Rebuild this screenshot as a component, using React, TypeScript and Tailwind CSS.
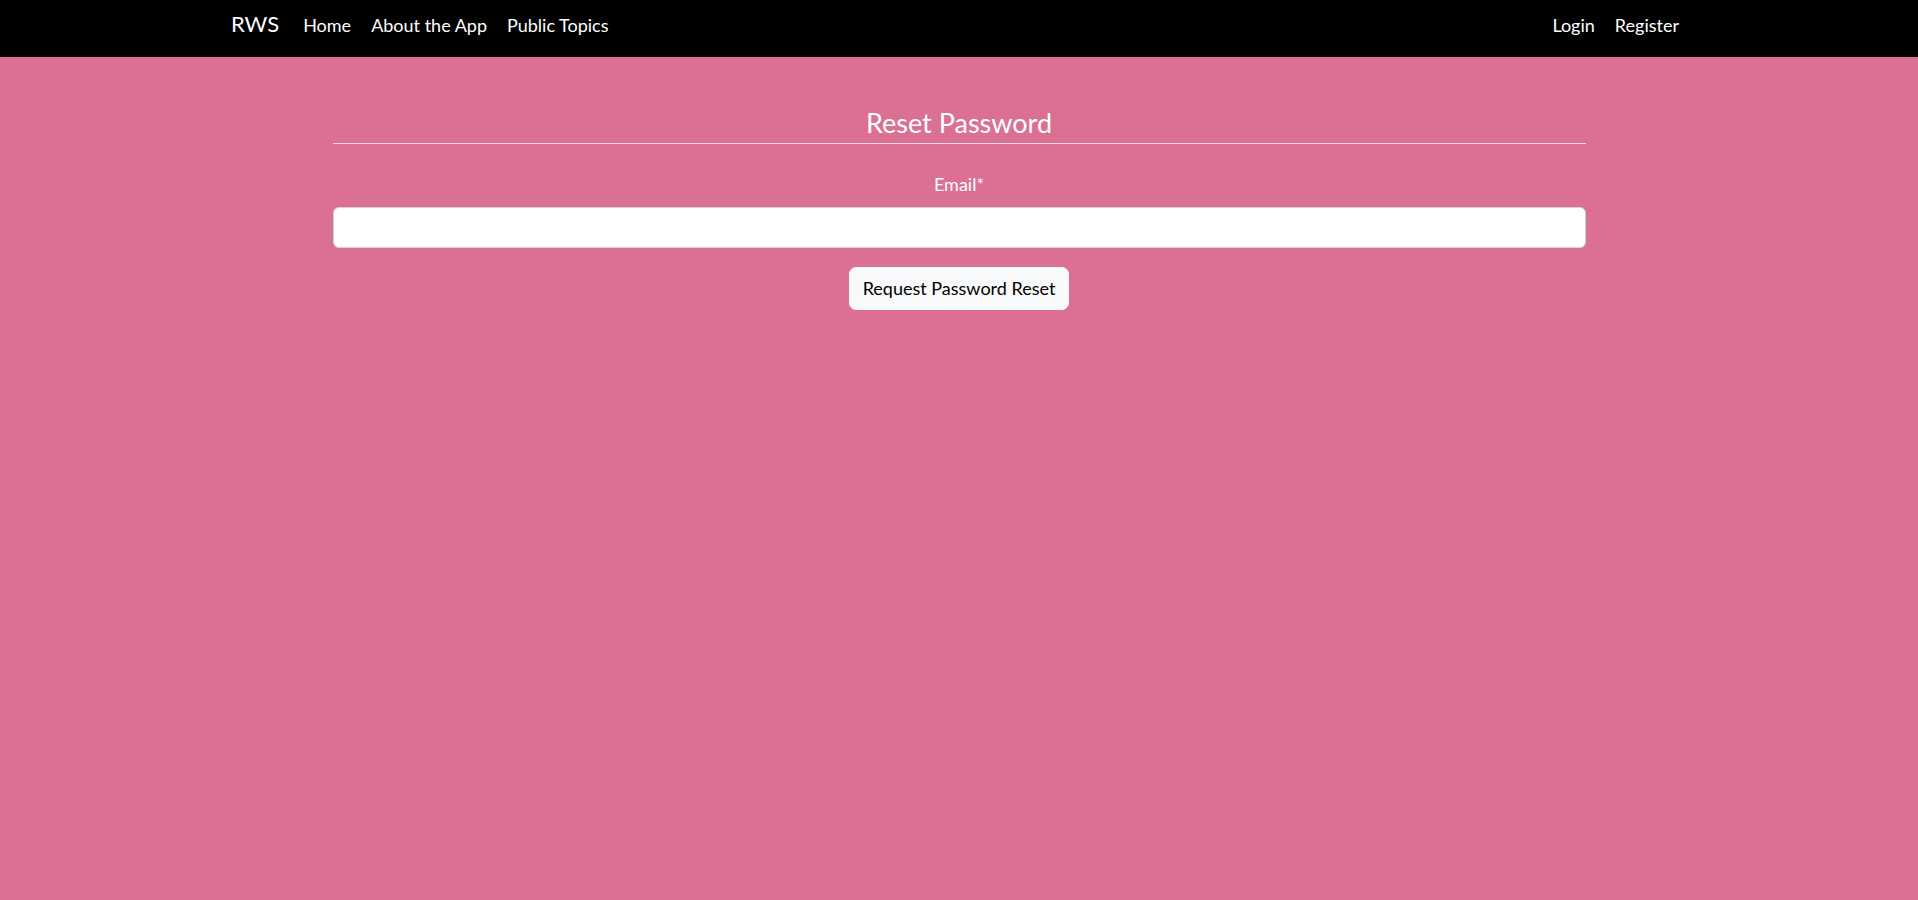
import { useState } from "react"

const leftLinks = ["Home", "About the App", "Public Topics"]
const rightLinks = ["Login", "Register"]

function NavBar() {
  return (
    <nav className="h-[57px] bg-black">
      <div className="mx-auto flex w-[1460px] items-baseline justify-between pt-[7px] pl-[2px]">
        <div className="flex items-baseline">
          <a href="#" className="mr-[14px] text-[22px] leading-[1.5] text-white">
            RWS
          </a>
          {leftLinks.map((link) => (
            <a key={link} href="#" className="px-[10px] text-[18px] leading-[1.5] text-white">
              {link}
            </a>
          ))}
        </div>
        <div className="flex items-baseline">
          {rightLinks.map((link) => (
            <a key={link} href="#" className="px-[10px] text-[18px] leading-[1.5] text-white">
              {link}
            </a>
          ))}
        </div>
      </div>
    </nav>
  )
}

export default function App() {
  const [email, setEmail] = useState("")

  return (
    <div className="min-h-[900px] bg-[#db7093] font-['Lato','Noto_Sans',sans-serif]">
      <NavBar />
      <main className="mx-auto w-[1253px] pt-[49px]">
        <h4 className="border-b border-white/75 pb-[3px] text-center text-[27px] leading-[34px] text-white">
          Reset Password
        </h4>
        <form
          className="flex flex-col items-center"
          onSubmit={(e) => e.preventDefault()}
        >
          <label
            htmlFor="email"
            className="mt-[27px] mb-[9px] text-[18px] leading-[1.5] text-white"
          >
            Email*
          </label>
          <input
            id="email"
            type="email"
            value={email}
            onChange={(e) => setEmail(e.target.value)}
            className="h-[41px] w-full rounded-[6px] border border-[#ced4da] bg-white px-3 text-[18px] text-[#212529] outline-none"
          />
          <button
            type="submit"
            className="mt-[19px] h-[43px] w-[220px] rounded-[7px] border border-[#f8f9fa] bg-[#f8f9fa] text-[18px] text-black"
          >
            Request Password Reset
          </button>
        </form>
      </main>
    </div>
  )
}
